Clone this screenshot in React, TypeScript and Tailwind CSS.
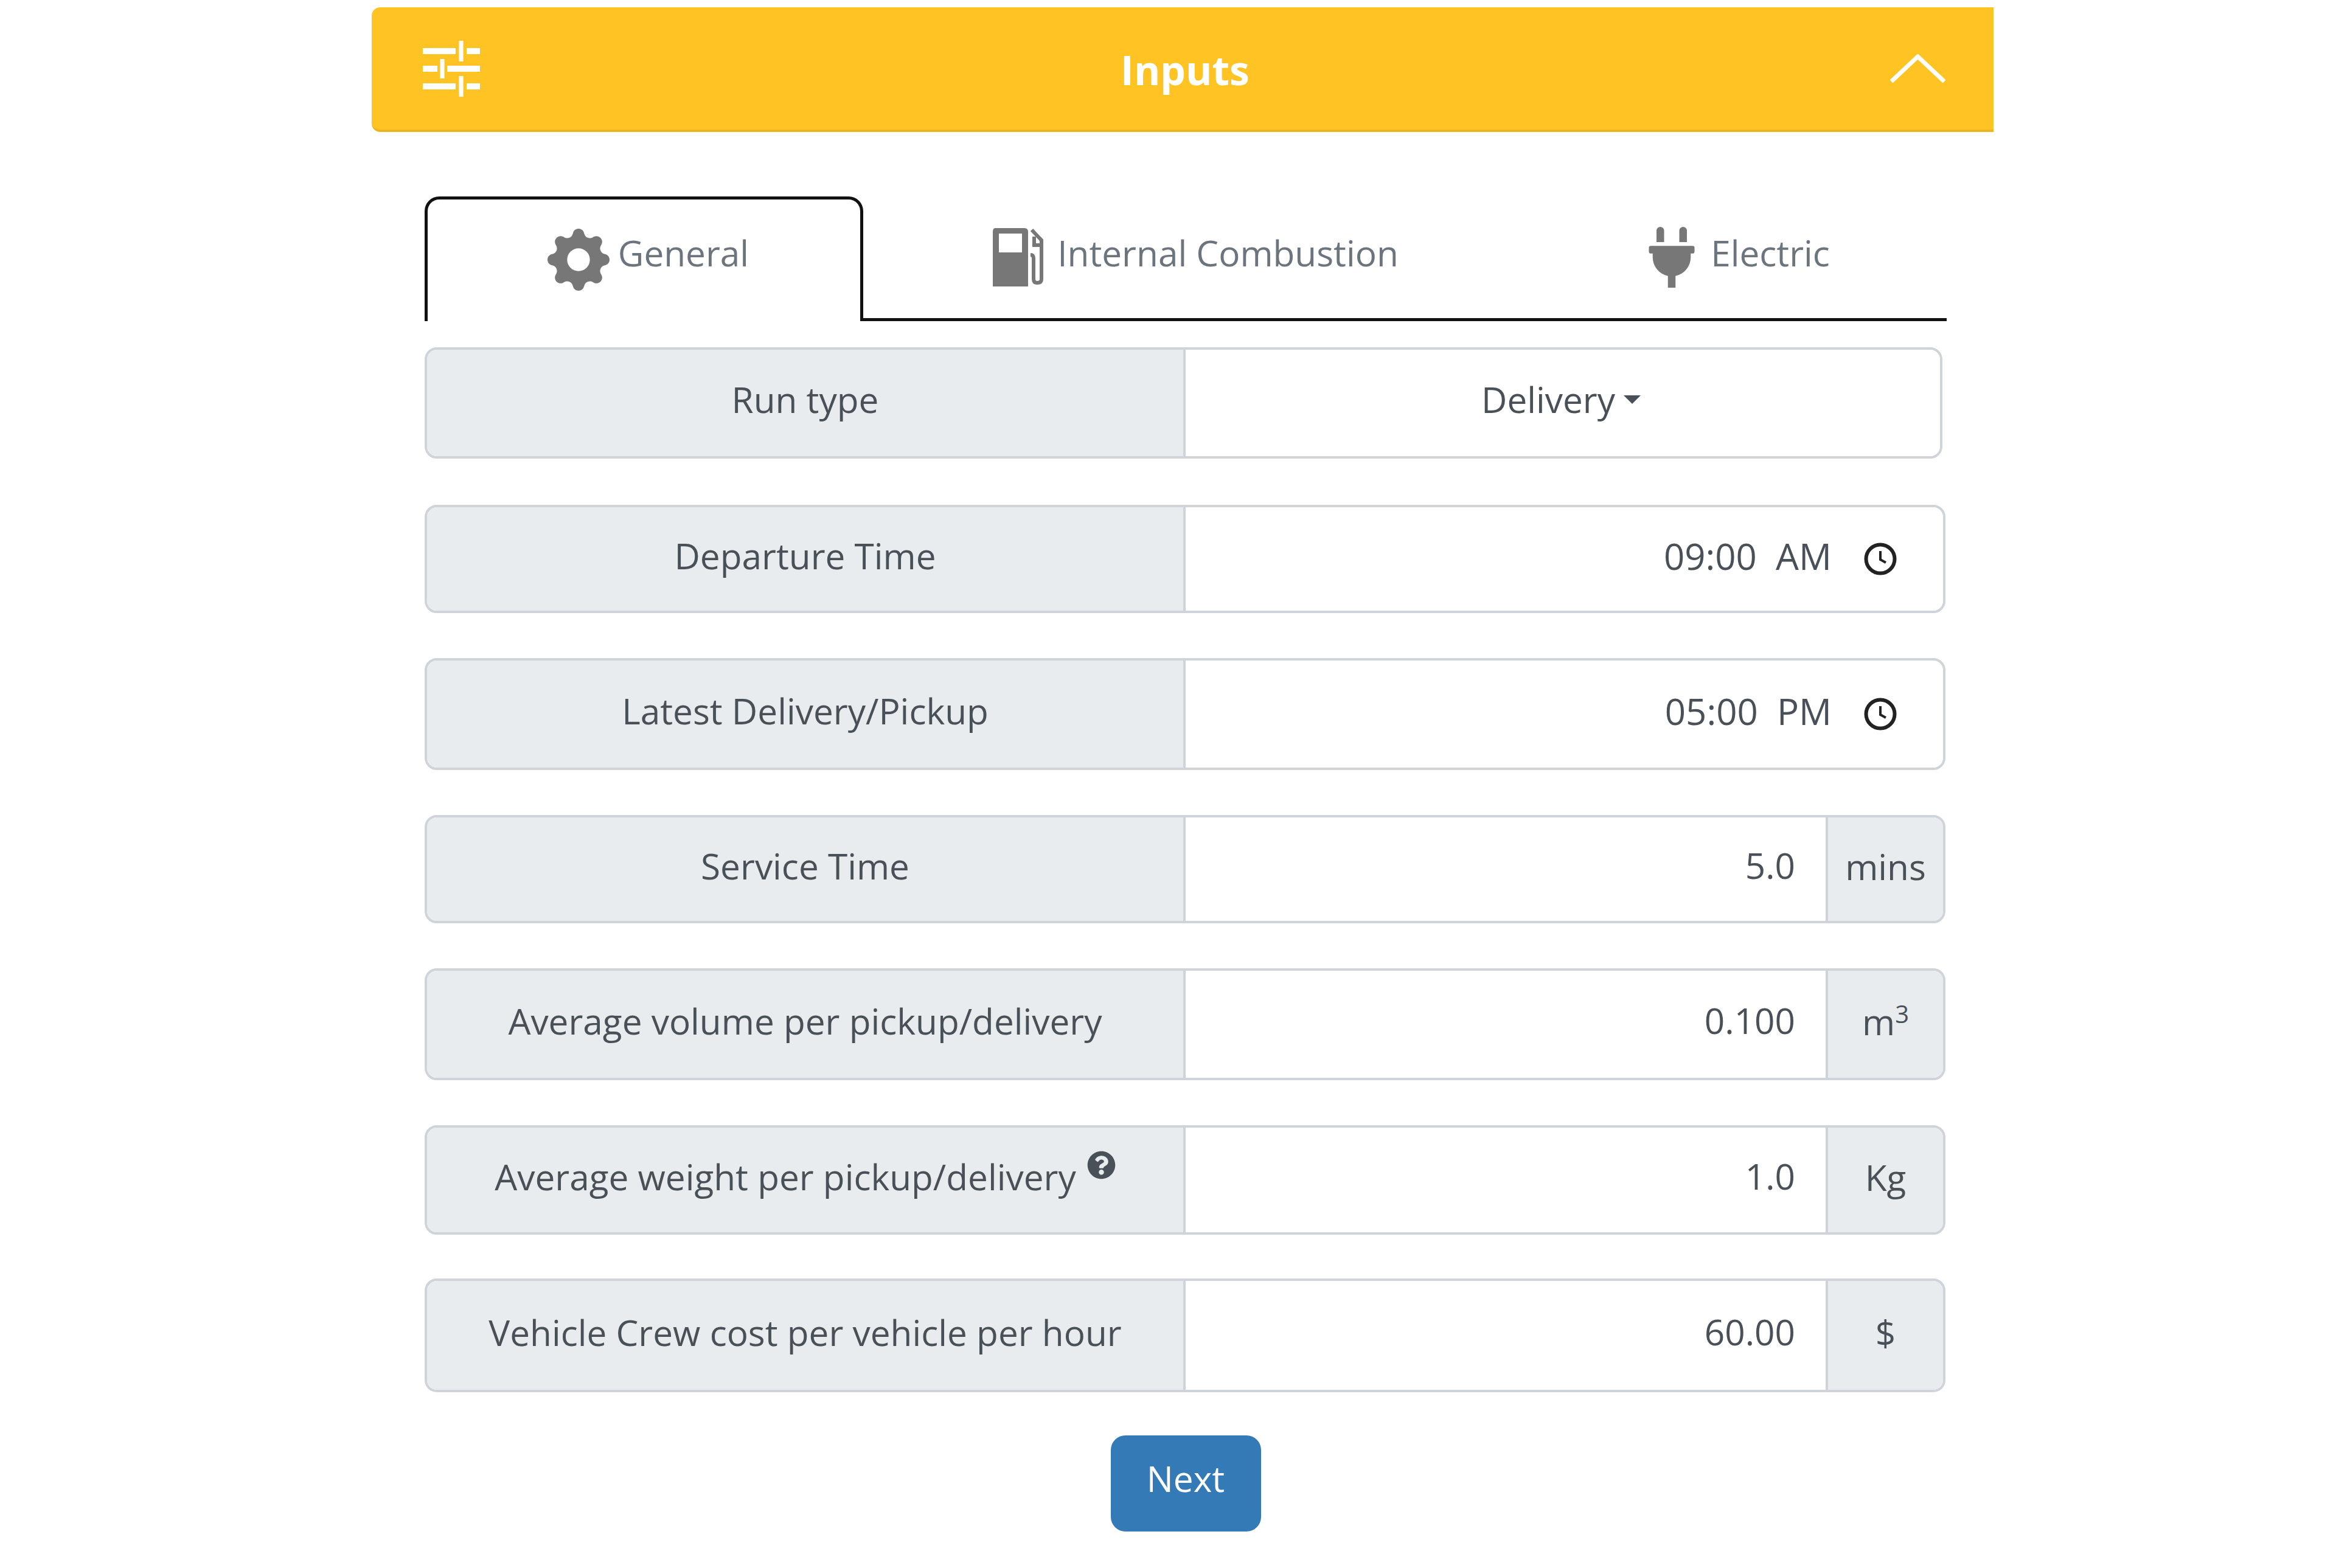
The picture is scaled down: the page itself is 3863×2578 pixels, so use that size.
import { BsGearFill } from "react-icons/bs";
import { FaPlug, FaQuestionCircle } from "react-icons/fa";

const rows = [
  { label: "Departure Time", time: "09:00  AM", className: "mt-[76px] h-[178px]" },
  { label: "Latest Delivery/Pickup", time: "05:00  PM", className: "mt-[74px] h-[184px]" },
  { label: "Service Time", value: "5.0", unit: "mins", className: "mt-[74px] h-[178px]" },
  { label: "Average volume per pickup/delivery", value: "0.100", unit: "m3", className: "mt-[74px] h-[184px]" },
  { label: "Average weight per pickup/delivery", value: "1.0", unit: "Kg", help: true, className: "mt-[74px] h-[180px]" },
  { label: "Vehicle Crew cost per vehicle per hour", value: "60.00", unit: "$", className: "mt-[72px] h-[187px]" },
];

const SlidersIcon = () => (
  <svg viewBox="0 0 94 92" className="h-[92px] w-[94px]" fill="none" stroke="white">
    <path d="M0 17H54M72 17H94M0 46H24M40 46H94M0 75H54M72 75H94" strokeWidth="10" />
    <path d="M63 0V34M32 30V62M63 58V92" strokeWidth="7" />
  </svg>
);

const GasIcon = () => (
  <svg viewBox="0 0 86 96" className="h-[96px] w-[86px]" fill="none">
    <path
      fillRule="evenodd"
      fill="#777"
      d="M4 0H52Q58 0 58 6V96H0V6Q0 0 4 0ZM10 9V40H48V9Z"
    />
    <path d="M64 3L80 20V84Q80 90 73 90Q67 90 67 84V50Q67 44 62 44" stroke="#777" strokeWidth="6" />
    <path d="M68 14V28H78" stroke="#777" strokeWidth="6" />
  </svg>
);

const ClockIcon = () => (
  <svg viewBox="0 0 54 54" className="ml-[53px] h-[54px] w-[54px]" fill="none" stroke="#222">
    <circle cx="27" cy="27" r="23.5" strokeWidth="6" />
    <path d="M27 14V28L36 33" strokeWidth="4" />
  </svg>
);

const Tab = ({ icon, label, className }: { icon: React.ReactNode; label: string; className: string }) => (
  <div className={`flex items-center justify-center text-[#6c757d] ${className}`}>
    {icon}
    <span className="pb-[14px]">{label}</span>
  </div>
);

const Row = ({ row }: { row: (typeof rows)[number] }) => (
  <div className={`flex w-[2500px] overflow-hidden rounded-[20px] border-[4px] border-[#ced4da] ${row.className}`}>
    <div className="flex w-[1247px] items-center justify-center gap-[18px] border-r-[4px] border-[#ced4da] bg-[#e9ecef] pb-[10px] text-[#495057]">
      <span>{row.label}</span>
      {row.help && <FaQuestionCircle className="mb-[40px] text-[47px] text-[#495057]" />}
    </div>
    {row.time ? (
      <div className="flex flex-1 items-center justify-end bg-white pr-[76px] text-[#495057]">
        <span className="whitespace-pre pb-[10px] text-[60px]">{row.time}</span>
        <ClockIcon />
      </div>
    ) : (
      <>
        <div className="flex flex-1 items-center justify-end bg-white pr-[50px] pb-[12px] text-[#495057]">
          {row.value}
        </div>
        <div className="flex w-[193px] items-center justify-center border-l-[4px] border-[#ced4da] bg-[#e9ecef] pb-[8px] text-[#495057]">
          {row.unit === "m3" ? (
            <span>
              m<sup className="text-[40px]">3</sup>
            </span>
          ) : (
            row.unit
          )}
        </div>
      </>
    )}
  </div>
);

const App = () => (
  <div className="min-h-[2578px] bg-white pt-[12px] pl-[611px] font-['Open_Sans',sans-serif] text-[58.5px]">
    <div className="w-[2666px]">
      <div className="flex h-[205px] items-center justify-between rounded-l-[14px] border-b-[4px] border-[#eeb420] bg-[#ffc423] pr-[79px] pl-[84px]">
        <SlidersIcon />
        <span className="pt-[4px] text-[66px] font-bold text-white">Inputs</span>
        <svg viewBox="0 0 91 47" className="h-[47px] w-[91px]" fill="none" stroke="white" strokeWidth="7">
          <path d="M2 45L45.5 4L89 45" />
        </svg>
      </div>

      <div className="ml-[87px] mt-[106px] w-[2502px]">
        <div className="flex h-[205px] w-full">
          <Tab
            icon={<BsGearFill className="mt-[8px] mr-[14px] text-[102px] text-[#777]" />}
            label="General"
            className="w-[721px] rounded-t-[24px] border-x-[5px] border-t-[5px] border-[#111] pb-[10px] pl-[14px]"
          />
          <Tab
            icon={<div className="mr-[20px]"><GasIcon /></div>}
            label="Internal Combustion"
            className="w-[1087px] border-b-[5px] border-[#111] pl-[6px]"
          />
          <Tab
            icon={<FaPlug className="mr-[14px] text-[100px] text-[#777]" />}
            label="Electric"
            className="flex-1 border-b-[5px] border-[#111]"
          />
        </div>

        <div className="mt-[43px] flex h-[183px] w-[2495px] overflow-hidden rounded-[20px] border-[4px] border-[#ced4da]">
          <div className="flex w-[1247px] items-center justify-center border-r-[4px] border-[#ced4da] bg-[#e9ecef] pb-[12px] text-[#495057]">
            Run type
          </div>
          <div className="flex flex-1 items-center justify-center gap-[14px] bg-white pr-[6px] pb-[12px] text-[#495057]">
            Delivery
            <span className="h-0 w-0 border-x-[14px] border-t-[14px] border-x-transparent border-t-[#495057]" />
          </div>
        </div>

        {rows.map((row) => (
          <Row key={row.label} row={row} />
        ))}

        <div className="mt-[71px] flex justify-center">
          <button className="h-[158px] w-[247px] rounded-[24px] bg-[#337ab7] pb-[16px] text-white">Next</button>
        </div>
      </div>
    </div>
  </div>
);

export default App;
